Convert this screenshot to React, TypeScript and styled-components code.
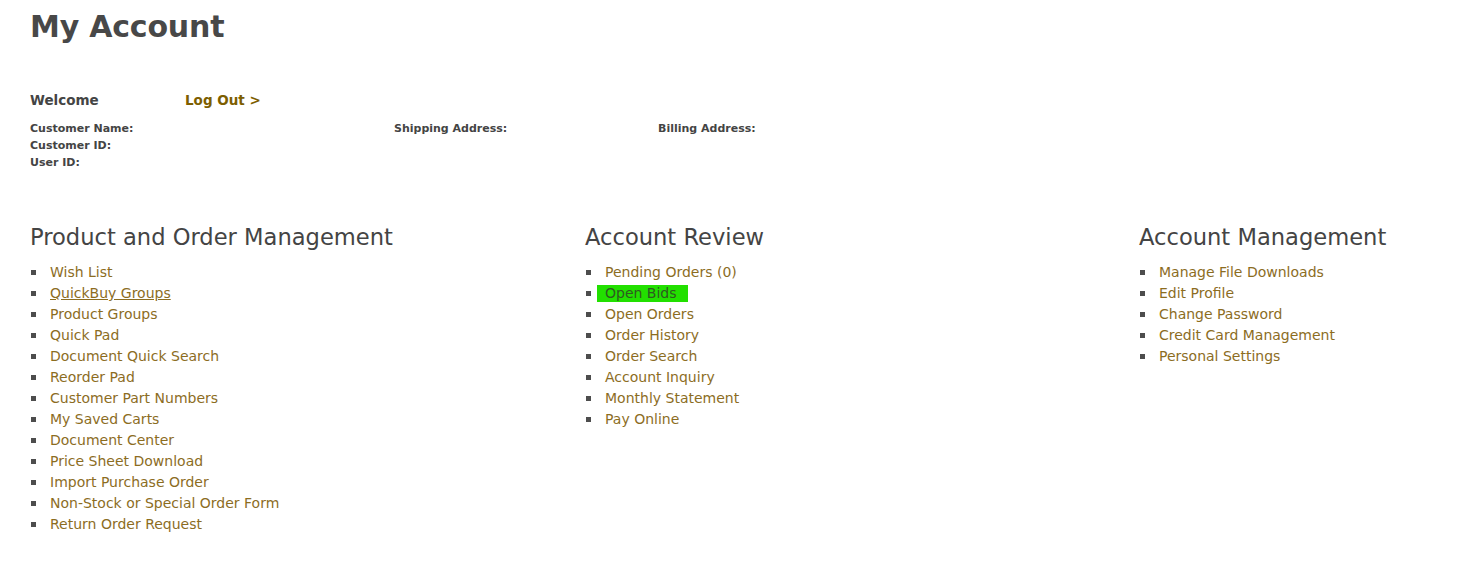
import React from "react";
import styled, { createGlobalStyle } from "styled-components";

const GlobalStyle = createGlobalStyle`
  body {
    margin: 0;
    background: #ffffff;
    font-family: "DejaVu Sans", "Open Sans", sans-serif;
    color: #444444;
  }
`;

const Page = styled.div`
  padding: 8px 30px 0 30px;
  width: 1460px;
  box-sizing: border-box;
`;

const Title = styled.h1`
  margin: 0;
  font-size: 30px;
  font-weight: 600;
  color: #484848;
  line-height: 38px;
  letter-spacing: -0.2px;
`;

const WelcomeRow = styled.div`
  display: flex;
  align-items: baseline;
  margin-top: 46px;
  font-size: 13.5px;
  font-weight: 700;
`;

const Welcome = styled.span`
  width: 155px;
  color: #444444;
`;

const LogOut = styled.a`
  color: #7d5e00;
  text-decoration: none;
`;

const InfoGrid = styled.div`
  display: grid;
  grid-template-columns: 364px 264px auto;
  margin-top: 12px;
  font-size: 11px;
  font-weight: 700;
  line-height: 17px;
  color: #444444;
`;

const InfoCol = styled.div`
  display: flex;
  flex-direction: column;
`;

const Sections = styled.div`
  display: grid;
  grid-template-columns: 555px 554px auto;
  margin-top: 51px;
`;

const SectionTitle = styled.h2`
  margin: 0;
  font-size: 22.6px;
  font-weight: 400;
  line-height: 30px;
  color: #444444;
`;

const LinkList = styled.ul`
  list-style: none;
  margin: 10px 0 0 0;
  padding: 0;
  font-size: 14px;
  line-height: 21px;
`;

const ListRow = styled.li`
  display: flex;
  align-items: center;
  gap: 14px;

  &::before {
    content: "";
    flex: none;
    width: 5px;
    height: 5px;
    margin-left: 1px;
    background: #4d4d4d;
  }
`;

const LinkItem = styled.a<{ $underline?: boolean; $highlight?: boolean }>`
  color: ${(p) => (p.$highlight ? "#2e5a20" : "#8c6d1f")};
  text-decoration: ${(p) => (p.$underline ? "underline" : "none")};
  background: ${(p) => (p.$highlight ? "#22e000" : "transparent")};
  padding: ${(p) => (p.$highlight ? "0 11px 0 8px" : "0")};
  margin: ${(p) => (p.$highlight ? "2px 0 2px -8px" : "0")};
  line-height: ${(p) => (p.$highlight ? "17px" : "inherit")};
`;

type Link = { label: string; underline?: boolean; highlight?: boolean };

const columns: { title: string; links: Link[] }[] = [
  {
    title: "Product and Order Management",
    links: [
      { label: "Wish List" },
      { label: "QuickBuy Groups", underline: true },
      { label: "Product Groups" },
      { label: "Quick Pad" },
      { label: "Document Quick Search" },
      { label: "Reorder Pad" },
      { label: "Customer Part Numbers" },
      { label: "My Saved Carts" },
      { label: "Document Center" },
      { label: "Price Sheet Download" },
      { label: "Import Purchase Order" },
      { label: "Non-Stock or Special Order Form" },
      { label: "Return Order Request" },
    ],
  },
  {
    title: "Account Review",
    links: [
      { label: "Pending Orders (0)" },
      { label: "Open Bids", highlight: true },
      { label: "Open Orders" },
      { label: "Order History" },
      { label: "Order Search" },
      { label: "Account Inquiry" },
      { label: "Monthly Statement" },
      { label: "Pay Online" },
    ],
  },
  {
    title: "Account Management",
    links: [
      { label: "Manage File Downloads" },
      { label: "Edit Profile" },
      { label: "Change Password" },
      { label: "Credit Card Management" },
      { label: "Personal Settings" },
    ],
  },
];

export default function App() {
  return (
    <>
      <GlobalStyle />
      <Page>
        <Title>My Account</Title>
        <WelcomeRow>
          <Welcome>Welcome</Welcome>
          <LogOut href="#">Log Out &gt;</LogOut>
        </WelcomeRow>
        <InfoGrid>
          <InfoCol>
            <span>Customer Name:</span>
            <span>Customer ID:</span>
            <span>User ID:</span>
          </InfoCol>
          <InfoCol>
            <span>Shipping Address:</span>
          </InfoCol>
          <InfoCol>
            <span>Billing Address:</span>
          </InfoCol>
        </InfoGrid>
        <Sections>
          {columns.map((col) => (
            <div key={col.title}>
              <SectionTitle>{col.title}</SectionTitle>
              <LinkList>
                {col.links.map((l) => (
                  <ListRow key={l.label}>
                    <LinkItem
                      href="#"
                      $underline={l.underline}
                      $highlight={l.highlight}
                    >
                      {l.label}
                    </LinkItem>
                  </ListRow>
                ))}
              </LinkList>
            </div>
          ))}
        </Sections>
      </Page>
    </>
  );
}
